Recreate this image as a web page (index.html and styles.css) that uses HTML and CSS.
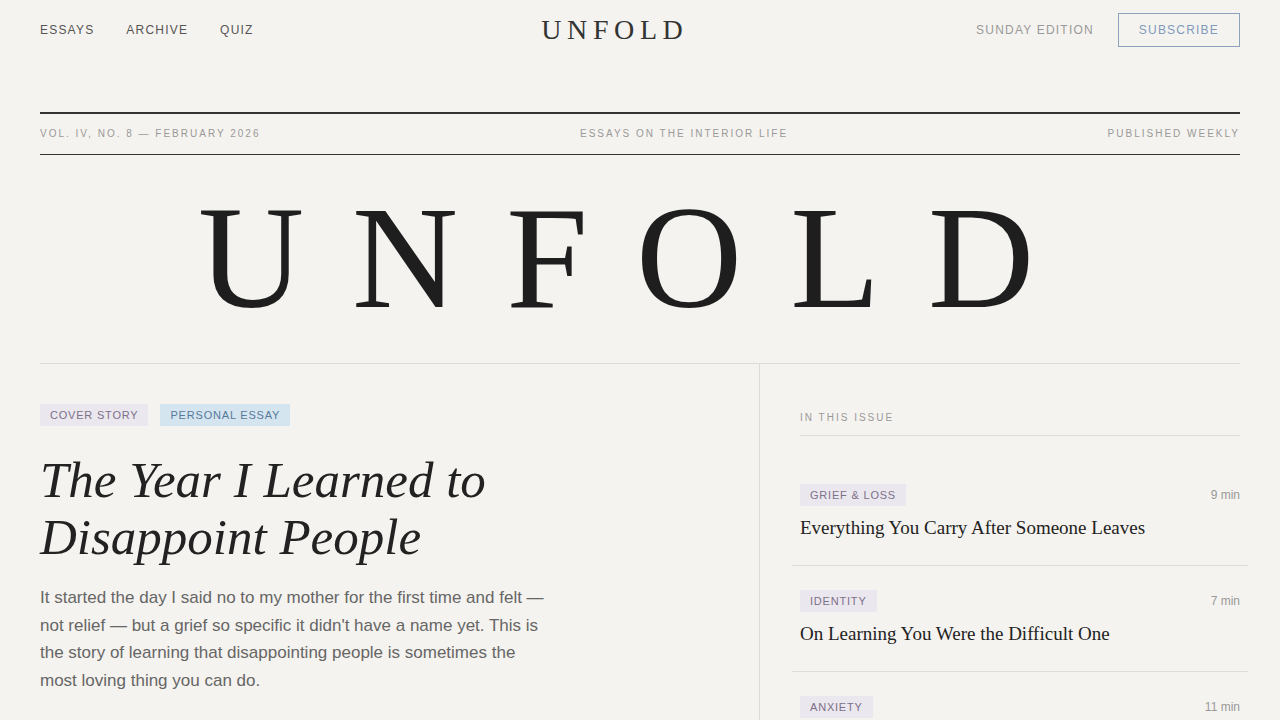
FILE: index.html
```html
<!DOCTYPE html>
<html lang="en">
<head>
<meta charset="utf-8">
<title>Unfold</title>
<link rel="stylesheet" href="styles.css">
</head>
<body>
<div class="page">
  <header class="topbar">
    <nav class="nav">
      <a class="nav-link">ESSAYS</a>
      <a class="nav-link">ARCHIVE</a>
      <a class="nav-link">QUIZ</a>
    </nav>
    <div class="logo">UNFOLD</div>
    <div class="actions">
      <span class="edition">SUNDAY EDITION</span>
      <a class="subscribe">SUBSCRIBE</a>
    </div>
  </header>

  <div class="meta">
    <span>VOL. IV, NO. 8 — FEBRUARY 2026</span>
    <span>ESSAYS ON THE INTERIOR LIFE</span>
    <span>PUBLISHED WEEKLY</span>
  </div>

  <h1 class="masthead">UNFOLD</h1>

  <main class="grid">
    <section class="feature">
      <div class="tags">
        <span class="tag tag-lav">COVER STORY</span>
        <span class="tag tag-blue">PERSONAL ESSAY</span>
      </div>
      <h2 class="headline">The Year I Learned to Disappoint People</h2>
      <p class="dek">It started the day I said no to my mother for the first time and felt — not relief — but a grief so specific it didn't have a name yet. This is the story of learning that disappointing people is sometimes the most loving thing you can do.</p>
      <div class="byline">by Clara Hensley</div>
    </section>

    <aside class="issue">
      <div class="issue-title">IN THIS ISSUE</div>
      <ul class="issue-list">
        <li class="item">
          <div class="item-top">
            <span class="tag tag-lav">GRIEF &amp; LOSS</span>
            <span class="time">9 min</span>
          </div>
          <div class="item-title">Everything You Carry After Someone Leaves</div>
        </li>
        <li class="item">
          <div class="item-top">
            <span class="tag tag-lav">IDENTITY</span>
            <span class="time">7 min</span>
          </div>
          <div class="item-title">On Learning You Were the Difficult One</div>
        </li>
        <li class="item">
          <div class="item-top">
            <span class="tag tag-lav">ANXIETY</span>
            <span class="time">11 min</span>
          </div>
          <div class="item-title">The Quiet Work of Staying Put</div>
        </li>
      </ul>
    </aside>
  </main>
</div>
</body>
</html>
```

FILE: styles.css
```css
* { box-sizing: border-box; }
html, body { margin: 0; padding: 0; }
body {
  background: #f5f3ef;
  color: #222;
  font-family: "Liberation Sans", Arial, sans-serif;
  overflow: hidden;
}
.page { padding: 0 40px; }

.topbar {
  display: flex;
  align-items: center;
  justify-content: space-between;
  height: 60px;
}
.nav { display: flex; gap: 32px; }
.nav-link {
  font-size: 12px;
  letter-spacing: 0.1em;
  color: #555;
}
.logo {
  font-family: "Liberation Serif", "Times New Roman", serif;
  font-size: 28px;
  letter-spacing: 0.2em;
  color: #333;
}
.actions {
  display: flex;
  align-items: center;
  gap: 24px;
}
.edition {
  font-size: 12px;
  letter-spacing: 0.1em;
  color: #999;
}
.subscribe {
  display: inline-block;
  border: 1px solid #8ea2bd;
  color: #7f9abd;
  font-size: 12px;
  letter-spacing: 0.1em;
  height: 34px;
  line-height: 32px;
  padding: 0 20px;
}

.meta {
  margin-top: 52px;
  border-top: 2px solid #333;
  border-bottom: 1px solid #333;
  display: flex;
  justify-content: space-between;
  align-items: center;
  height: 43px;
  padding-bottom: 2px;
  font-size: 10px;
  letter-spacing: 0.2em;
  color: #999;
}

.masthead {
  margin: 0;
  font-family: "Liberation Serif", "Times New Roman", serif;
  font-weight: 400;
  font-size: 147px;
  line-height: 147px;
  letter-spacing: 48px;
  text-align: center;
  color: #1e1e1e;
  padding: 29px 0 32px;
  border-bottom: 1px solid #dedad4;
}

.grid {
  display: grid;
  grid-template-columns: 720px 480px;
}
.feature {
  padding: 40px 40px 0 0;
  border-right: 1px solid #dedad4;
}
.tags { display: flex; gap: 12px; }
.tag {
  display: inline-block;
  font-size: 11px;
  letter-spacing: 0.8px;
  height: 22px;
  line-height: 22px;
  padding: 0 10px;
}
.tag-lav { background: #ebe7ef; color: #7b7088; }
.tag-blue { background: #d5e5ef; color: #56799a; }

.headline {
  margin: 26px 0 0;
  max-width: 600px;
  font-family: "Liberation Serif", "Times New Roman", serif;
  font-style: italic;
  font-weight: 400;
  font-size: 51px;
  line-height: 57px;
  color: #222;
}
.dek {
  margin: 18px 0 0;
  max-width: 510px;
  font-size: 17px;
  line-height: 27.7px;
  color: #666;
}
.byline {
  margin-top: 22px;
  font-size: 13px;
  color: #888;
}

.issue { padding: 40px 0 0 40px; }
.issue-title {
  font-size: 10px;
  letter-spacing: 0.2em;
  color: #999;
  padding: 8px 0 12px;
  border-bottom: 1px solid #e0dcd6;
}
.issue-list {
  list-style: none;
  margin: 0 -8px;
  padding: 24px 0 0;
}
.item {
  padding: 24px 8px 23px;
  border-bottom: 1px solid #e0dcd6;
}
.item-top {
  display: flex;
  justify-content: space-between;
  align-items: center;
}
.time { font-size: 12px; color: #999; }
.item-title {
  margin-top: 8px;
  font-family: "Liberation Serif", "Times New Roman", serif;
  font-size: 19px;
  line-height: 28px;
  color: #222;
}
```
